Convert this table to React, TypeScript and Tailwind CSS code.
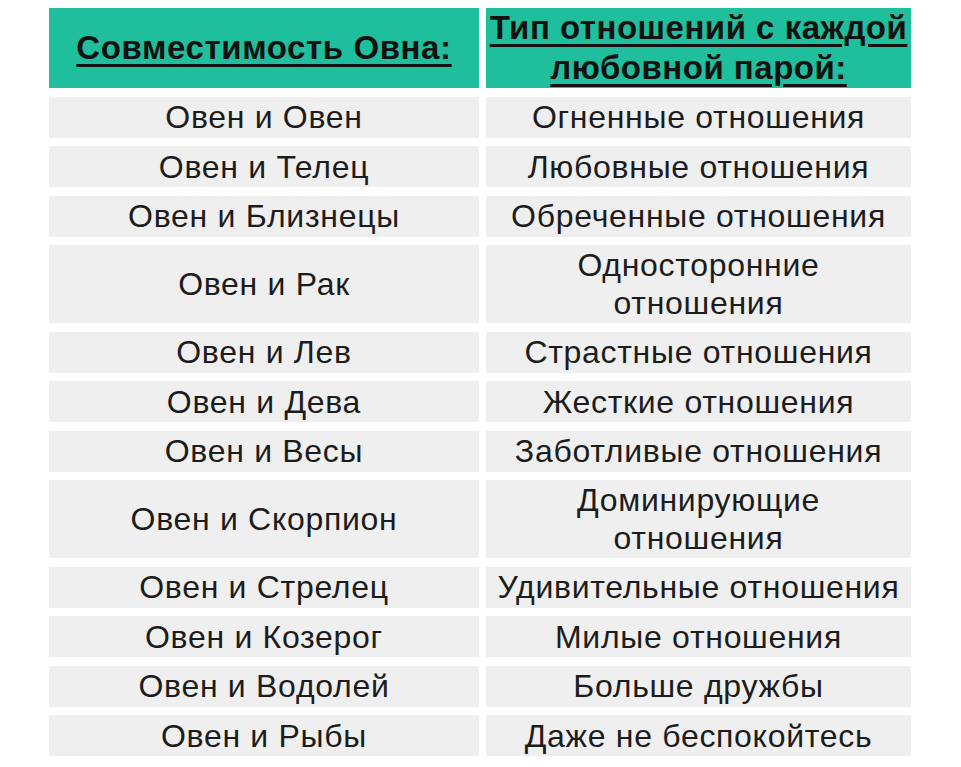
const rows: { sign: string; relation: string; tall?: boolean }[] = [
  { sign: 'Овен и Овен', relation: 'Огненные отношения' },
  { sign: 'Овен и Телец', relation: 'Любовные отношения' },
  { sign: 'Овен и Близнецы', relation: 'Обреченные отношения' },
  { sign: 'Овен и Рак', relation: 'Односторонние отношения', tall: true },
  { sign: 'Овен и Лев', relation: 'Страстные отношения' },
  { sign: 'Овен и Дева', relation: 'Жесткие отношения' },
  { sign: 'Овен и Весы', relation: 'Заботливые отношения' },
  { sign: 'Овен и Скорпион', relation: 'Доминирующие отношения', tall: true },
  { sign: 'Овен и Стрелец', relation: 'Удивительные отношения' },
  { sign: 'Овен и Козерог', relation: 'Милые отношения' },
  { sign: 'Овен и Водолей', relation: 'Больше дружбы' },
  { sign: 'Овен и Рыбы', relation: 'Даже не беспокойтесь' },
];

export default function App() {
  return (
    <div className="min-h-screen bg-white pt-[8px] pl-[49px] font-[family-name:'Liberation_Sans',Arial,sans-serif]">
      <div className="grid w-[862px] grid-cols-[430px_425px] gap-x-[7px] gap-y-[8.5px]">
        <div className="flex h-[80px] items-center justify-center bg-[#1fbe9c] text-center text-[33px] font-bold leading-[40px] tracking-[0.6px] text-[#111] underline decoration-[3px] underline-offset-[5px]">
          Совместимость Овна:
        </div>
        <div className="flex h-[80px] items-center justify-center bg-[#1fbe9c] text-center text-[33px] font-bold leading-[40px] tracking-[0.5px] text-[#111] underline decoration-[3px] underline-offset-[5px]">
          Тип отношений с каждой любовной парой:
        </div>
        {rows.map((r) => (
          <>
            <div
              key={r.sign + 'a'}
              className={`flex items-center justify-center bg-[#efefef] text-center text-[32px] leading-[38px] tracking-[0.7px] text-[#1c1c1c] ${r.tall ? 'h-[78px]' : 'h-[41px]'}`}
            >
              {r.sign}
            </div>
            <div
              key={r.sign + 'b'}
              className={`flex items-center justify-center bg-[#efefef] px-[60px] text-center text-[32px] leading-[38px] tracking-[0.7px] text-[#1c1c1c] ${r.tall ? 'h-[78px]' : 'h-[41px]'}`}
            >
              <span className={r.tall ? '' : 'whitespace-nowrap'}>{r.relation}</span>
            </div>
          </>
        ))}
      </div>
    </div>
  );
}
